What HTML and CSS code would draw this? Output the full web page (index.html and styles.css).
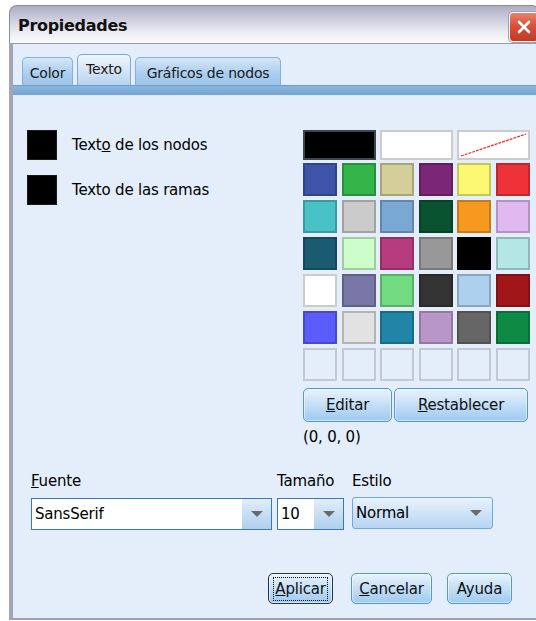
FILE: index.html
```html
<!DOCTYPE html>
<html lang="es">
<head>
<meta charset="utf-8">
<title>Propiedades</title>
<link rel="stylesheet" href="styles.css">
</head>
<body>
<div class="window">
  <div class="titlebar">
    <span class="title">Propiedades</span>
    <button class="close" aria-label="Cerrar">
      <svg width="16" height="16" viewBox="0 0 16 16"><path d="M3 3 L13 13 M13 3 L3 13" stroke="#fff" stroke-width="2.6" stroke-linecap="round"/></svg>
    </button>
  </div>
  <div class="frame">
    <div class="tabs">
      <div class="tab">Color</div>
      <div class="tab active">Texto</div>
      <div class="tab">Gráficos de nodos</div>
    </div>
    <div class="tabline"></div>
    <div class="content">
      <div class="top">
        <div class="targets">
          <div class="target"><span class="swatch"></span><span>Text<u>o</u> de los nodos</span></div>
          <div class="target"><span class="swatch"></span><span>Texto de las ramas</span></div>
        </div>
        <div class="picker">
          <div class="wide-row">
            <span class="cell" style="background:#000000"></span>
            <span class="cell" style="background:#ffffff"></span>
            <span class="cell none">
              <svg class="slash" viewBox="0 0 70 26" preserveAspectRatio="none"><line x1="2" y1="24" x2="68" y2="2" stroke="#ff2020" stroke-width="1.2" stroke-dasharray="3 1"/></svg>
            </span>
          </div>
          <div class="grid">
            <span class="cell" style="background:#3c55a8"></span>
            <span class="cell" style="background:#33b54a"></span>
            <span class="cell" style="background:#d4cf98"></span>
            <span class="cell" style="background:#7b2676"></span>
            <span class="cell" style="background:#fbf872"></span>
            <span class="cell" style="background:#ee3338"></span>

            <span class="cell" style="background:#48c2c6"></span>
            <span class="cell" style="background:#cbcbcb"></span>
            <span class="cell" style="background:#7aa8d4"></span>
            <span class="cell" style="background:#0b5230"></span>
            <span class="cell" style="background:#f8991f"></span>
            <span class="cell" style="background:#dfb9ef"></span>

            <span class="cell" style="background:#1b5b72"></span>
            <span class="cell" style="background:#cdfec9"></span>
            <span class="cell" style="background:#b73c7d"></span>
            <span class="cell" style="background:#989898"></span>
            <span class="cell" style="background:#000000"></span>
            <span class="cell" style="background:#b4e6e4"></span>

            <span class="cell" style="background:#ffffff"></span>
            <span class="cell" style="background:#7977a6"></span>
            <span class="cell" style="background:#72da80"></span>
            <span class="cell" style="background:#333333"></span>
            <span class="cell" style="background:#acd0ee"></span>
            <span class="cell" style="background:#a01619"></span>

            <span class="cell" style="background:#5a5cfb"></span>
            <span class="cell" style="background:#e2e2e2"></span>
            <span class="cell" style="background:#2185a7"></span>
            <span class="cell" style="background:#b897c8"></span>
            <span class="cell" style="background:#666666"></span>
            <span class="cell" style="background:#0e8a44"></span>

            <span class="cell empty"></span>
            <span class="cell empty"></span>
            <span class="cell empty"></span>
            <span class="cell empty"></span>
            <span class="cell empty"></span>
            <span class="cell empty"></span>
          </div>
          <div class="picker-buttons">
            <button class="btn edit"><u>E</u>ditar</button>
            <button class="btn reset"><u>R</u>establecer</button>
          </div>
          <div class="rgb">(0, 0, 0)</div>
        </div>
      </div>

      <div class="font-row">
        <div class="field font">
          <label><u>F</u>uente</label>
          <div class="combo editable"><span class="value">SansSerif</span><span class="arrow"></span></div>
        </div>
        <div class="field size">
          <label>Tamaño</label>
          <div class="combo editable"><span class="value">10</span><span class="arrow"></span></div>
        </div>
        <div class="field style">
          <label>Estilo</label>
          <div class="combo plain"><span class="value">Normal</span><span class="arrow"></span></div>
        </div>
      </div>

      <div class="actions">
        <button class="btn default"><span class="focus"><u>A</u>plicar</span></button>
        <button class="btn"><u>C</u>ancelar</button>
        <button class="btn">Ayuda</button>
      </div>
    </div>
  </div>
</div>
</body>
</html>
```

FILE: styles.css
```css
html, body {
  margin: 0;
  padding: 0;
  background: #ffffff;
  overflow: hidden;
  height: 621px;
}

body {
  font-family: "DejaVu Sans", "Liberation Sans", sans-serif;
  font-size: 15px;
  letter-spacing: -0.2px;
  color: #000;
}

.window {
  margin: 5px 0 0 9px;
  width: 531px;
}

/* title bar */
.titlebar {
  height: 38px;
  box-sizing: border-box;
  display: flex;
  align-items: center;
  padding: 0 0 0 8px;
  border: 1px solid #8c8ca0;
  border-bottom: none;
  border-radius: 8px 8px 0 0;
  background: linear-gradient(to bottom, #aeaec4 0%, #c8c8d9 30%, #ebebf2 70%, #fbfbfd 100%);
}

.title {
  font-family: "DejaVu Sans", sans-serif;
  font-weight: bold;
  font-size: 16px;
  letter-spacing: -0.3px;
  color: #111;
  flex: 1;
  padding-top: 2px;
}

.close {
  width: 30px;
  height: 30px;
  margin: 4px 0 0 0;
  padding: 0;
  border: 1px solid #ffffff;
  border-radius: 4px;
  background: linear-gradient(to bottom, #e8826e 0%, #d9513a 45%, #c23a24 100%);
  box-shadow: 0 0 0 1px #a0a0b0;
  display: flex;
  align-items: center;
  justify-content: center;
}

/* window frame */
.frame {
  border-left: 4px solid #a5a5b8;
  box-shadow: inset 1px 0 0 #e8e8f0;
  border-top: 1px solid #9a9ab0;
  border-bottom: 2px solid #a0a0b4;
  background: #e3eefa;
  height: 574px;
  display: flex;
  flex-direction: column;
}

/* tabs */
.tabs {
  display: flex;
  align-items: flex-end;
  padding: 0 0 0 9px;
  gap: 4px;
  height: 41px;
}

.tab {
  height: 28px;
  box-sizing: border-box;
  padding: 7px 0 0;
  text-align: center;
  border: 1px solid #86b0d8;
  border-bottom: none;
  border-radius: 5px 5px 0 0;
  background: linear-gradient(to bottom, #d2e6f7 0%, #aacdee 60%, #9cc4e8 100%);
  font-size: 14px;
  color: #1a1a1a;
}

.tab:first-child { width: 51px; }

.tab.active {
  height: 31px;
  width: 54px;
  padding-top: 6px;
  background: linear-gradient(to bottom, #eef5fc 0%, #cfe2f5 60%, #b4d3ef 100%);
  border-color: #7eaad6;
}

.tab:last-child { width: 146px; }

.tabline {
  height: 9px;
  background: linear-gradient(to bottom, #8ab6de 0%, #74a5d2 100%);
  border-top: 1px solid #6e9cc8;
}

/* content */
.content {
  flex: 1;
  display: flex;
  flex-direction: column;
  padding: 0 0 0 14px;
}

.top {
  display: flex;
  padding-top: 35px;
}

.targets {
  width: 276px;
  display: flex;
  flex-direction: column;
  gap: 15px;
}

.target {
  display: flex;
  align-items: center;
  gap: 15px;
  height: 30px;
}

.swatch {
  width: 30px;
  height: 30px;
  background: #000;
  box-shadow: inset 0 0 0 1px #1a1a1a;
}

.picker {
  width: 227px;
}

.cell {
  display: block;
  box-sizing: border-box;
  border: 2px solid rgba(0, 0, 0, 0.2);
  position: relative;
}

.wide-row {
  display: grid;
  grid-template-columns: 1fr 1fr 1fr;
  gap: 4px;
  height: 30px;
}

.wide-row .cell:first-child { border-color: #3c4450; }

.cell.none {
  background: #fff;
}

.slash {
  position: absolute;
  inset: 0;
  width: 100%;
  height: 100%;
}

.grid {
  display: grid;
  grid-template-columns: repeat(6, 1fr);
  grid-auto-rows: 33px;
  column-gap: 4.6px;
  row-gap: 4px;
  margin-top: 3px;
}

.cell.empty {
  border-color: #c2c9d2;
  background: transparent;
}

.picker-buttons {
  display: flex;
  gap: 2px;
  margin-top: 7px;
}

.btn {
  font-family: "DejaVu Sans", "Liberation Sans", sans-serif;
  font-size: 15px;
  letter-spacing: -0.2px;
  color: #111;
  height: 34px;
  border: 1px solid #4a98e0;
  border-radius: 5px;
  background: linear-gradient(to bottom, #e8f3fd 0%, #c4def6 50%, #9fcaf0 100%);
  padding: 0;
  box-shadow: inset 0 0 0 1px rgba(255, 255, 255, 0.5);
}

.btn.edit { width: 89px; }
.btn.reset { width: 134px; }

.rgb {
  margin-top: 6px;
}

/* font selection row */
.font-row {
  display: flex;
  margin-top: 26px;
  padding-left: 4px;
}

.field label {
  display: block;
  height: 20px;
  line-height: 18px;
  margin-bottom: 6px;
}

.font { width: 246px; }
.size { width: 75px; }
.style { width: 141px; }

.combo {
  height: 32px;
  box-sizing: border-box;
  display: flex;
  align-items: center;
  border: 1.5px solid #3a78bc;
  background: #fff;
}

.font .combo { width: 241px; }
.size .combo { width: 67px; }

.combo .value {
  flex: 1;
  padding-left: 3px;
}

.combo .arrow {
  width: 29px;
  align-self: stretch;
  background: linear-gradient(to bottom, #e2eefa 0%, #c2dbf2 60%, #b0d0ee 100%);
  position: relative;
}

.combo .arrow::after {
  content: "";
  position: absolute;
  left: 9px;
  top: 12px;
  border-left: 6px solid transparent;
  border-right: 6px solid transparent;
  border-top: 6px solid #6a6a6a;
}

.combo.plain {
  width: 141px;
  margin-top: -1px;
  border: 1px solid #70a8e0;
  border-radius: 3px;
  background: linear-gradient(to bottom, #e8f2fc 0%, #cfe3f7 50%, #b7d5f1 100%);
}

.combo.plain .arrow {
  background: none;
}

.combo.plain .arrow::after { left: 7px; }

/* dialog buttons */
.actions {
  display: flex;
  gap: 18px;
  margin-top: 43px;
  padding-left: 241px;
}

.actions .btn {
  height: 31px;
  width: 81px;
}

.actions .btn.default {
  width: 65px;
  border: 1px solid #2a3240;
  display: flex;
  align-items: center;
  justify-content: center;
}

.actions .btn:last-child { width: 65px; margin-left: -3px; }

.focus {
  border: 1px dotted #111;
  padding: 3px 1px;
  line-height: 16px;
}
```
